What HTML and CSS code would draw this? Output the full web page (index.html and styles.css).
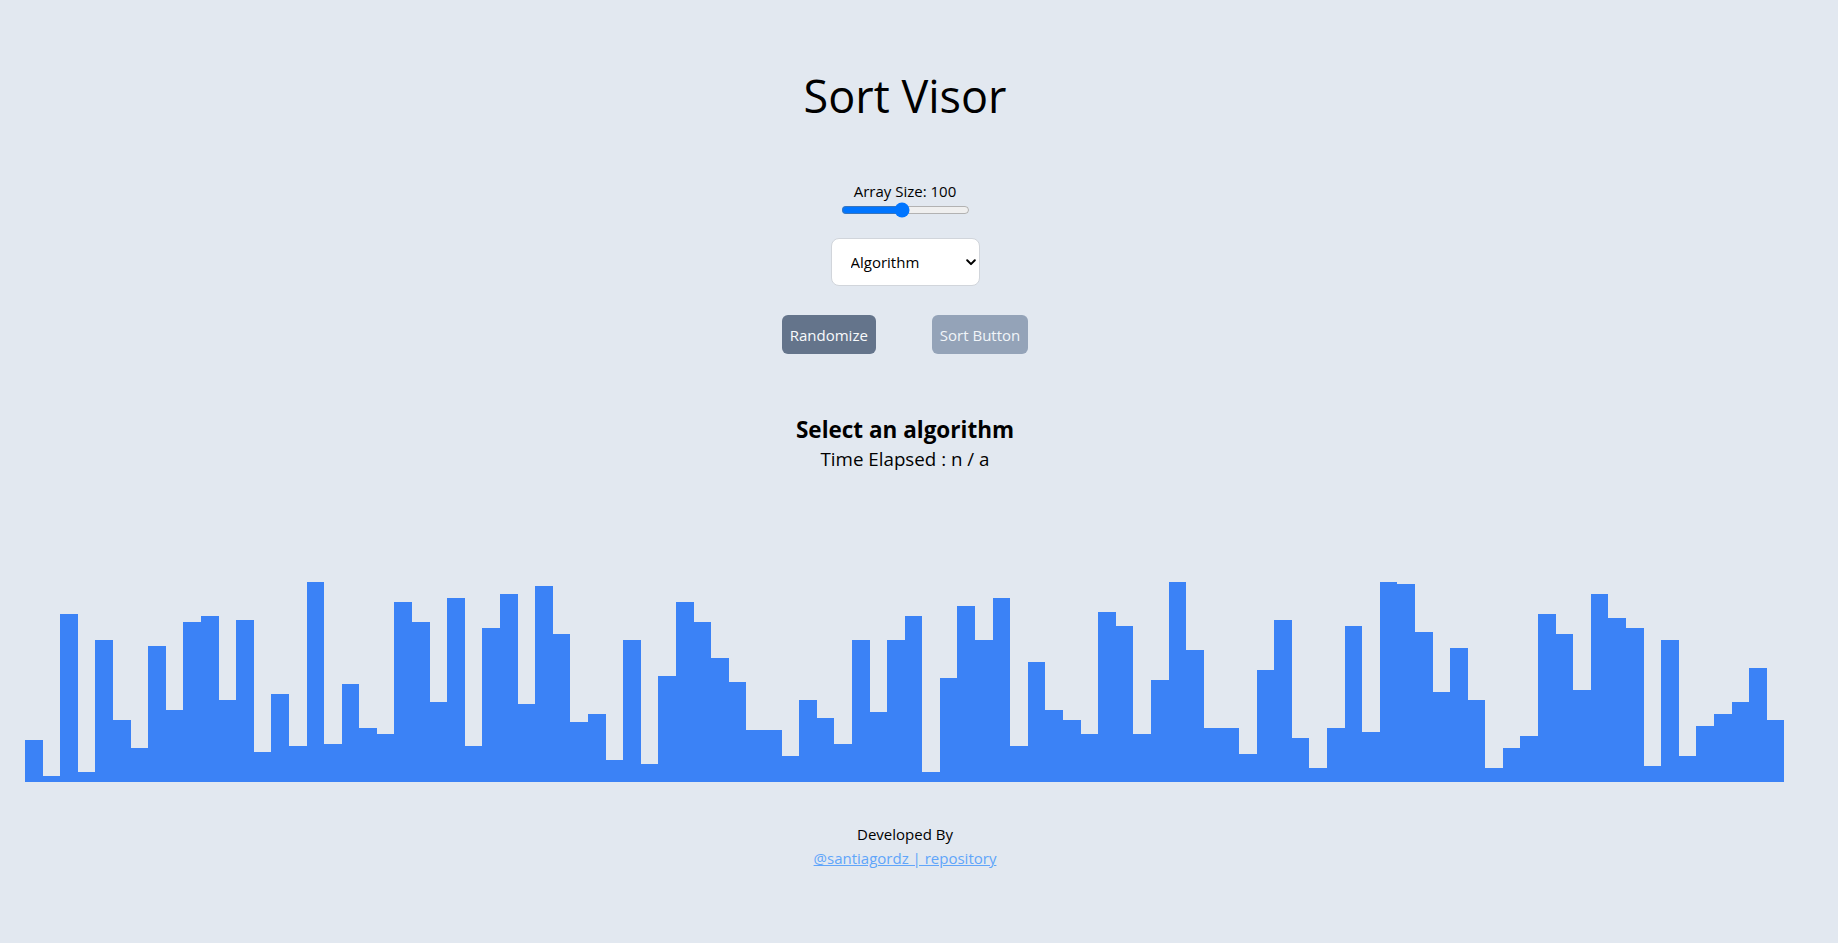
FILE: index.html
```html
<!DOCTYPE html>
<html lang="en">
<head>
<meta charset="utf-8">
<title>Sort Visor</title>
<link rel="stylesheet" href="styles.css">
</head>
<body>
<div class="page">
  <h1 class="title">Sort Visor</h1>
  <label class="size-label" for="size">Array Size: 100</label>
  <input class="size-range" id="size" type="range" min="10" max="200" value="100">
  <div class="select-wrap">
    <select class="algo-select">
      <option>Algorithm</option>
      <option>Bubble Sort</option>
      <option>Selection Sort</option>
      <option>Insertion Sort</option>
      <option>Merge Sort</option>
      <option>Quick Sort</option>
    </select>
    <svg class="chevron" width="10" height="7" viewBox="0 0 10 7" aria-hidden="true"><path d="M1.2 1.3 L5 5.1 L8.8 1.3" fill="none" stroke="#000" stroke-width="2" stroke-linecap="round" stroke-linejoin="round"/></svg>
  </div>
  <div class="actions">
    <button class="btn btn-random" type="button">Randomize</button>
    <button class="btn btn-sort" type="button">Sort Button</button>
  </div>
  <h2 class="status">Select an algorithm</h2>
  <p class="elapsed">Time Elapsed : n / a</p>
  <div class="bars">
    <div class="bar" style="height:42px"></div>
    <div class="bar" style="height:6px"></div>
    <div class="bar" style="height:168px"></div>
    <div class="bar" style="height:10px"></div>
    <div class="bar" style="height:142px"></div>
    <div class="bar" style="height:62px"></div>
    <div class="bar" style="height:34px"></div>
    <div class="bar" style="height:136px"></div>
    <div class="bar" style="height:72px"></div>
    <div class="bar" style="height:160px"></div>
    <div class="bar" style="height:166px"></div>
    <div class="bar" style="height:82px"></div>
    <div class="bar" style="height:162px"></div>
    <div class="bar" style="height:30px"></div>
    <div class="bar" style="height:88px"></div>
    <div class="bar" style="height:36px"></div>
    <div class="bar" style="height:200px"></div>
    <div class="bar" style="height:38px"></div>
    <div class="bar" style="height:98px"></div>
    <div class="bar" style="height:54px"></div>
    <div class="bar" style="height:48px"></div>
    <div class="bar" style="height:180px"></div>
    <div class="bar" style="height:160px"></div>
    <div class="bar" style="height:80px"></div>
    <div class="bar" style="height:184px"></div>
    <div class="bar" style="height:36px"></div>
    <div class="bar" style="height:154px"></div>
    <div class="bar" style="height:188px"></div>
    <div class="bar" style="height:78px"></div>
    <div class="bar" style="height:196px"></div>
    <div class="bar" style="height:148px"></div>
    <div class="bar" style="height:60px"></div>
    <div class="bar" style="height:68px"></div>
    <div class="bar" style="height:22px"></div>
    <div class="bar" style="height:142px"></div>
    <div class="bar" style="height:18px"></div>
    <div class="bar" style="height:106px"></div>
    <div class="bar" style="height:180px"></div>
    <div class="bar" style="height:160px"></div>
    <div class="bar" style="height:124px"></div>
    <div class="bar" style="height:100px"></div>
    <div class="bar" style="height:52px"></div>
    <div class="bar" style="height:52px"></div>
    <div class="bar" style="height:26px"></div>
    <div class="bar" style="height:82px"></div>
    <div class="bar" style="height:64px"></div>
    <div class="bar" style="height:38px"></div>
    <div class="bar" style="height:142px"></div>
    <div class="bar" style="height:70px"></div>
    <div class="bar" style="height:142px"></div>
    <div class="bar" style="height:166px"></div>
    <div class="bar" style="height:10px"></div>
    <div class="bar" style="height:104px"></div>
    <div class="bar" style="height:176px"></div>
    <div class="bar" style="height:142px"></div>
    <div class="bar" style="height:184px"></div>
    <div class="bar" style="height:36px"></div>
    <div class="bar" style="height:120px"></div>
    <div class="bar" style="height:72px"></div>
    <div class="bar" style="height:62px"></div>
    <div class="bar" style="height:48px"></div>
    <div class="bar" style="height:170px"></div>
    <div class="bar" style="height:156px"></div>
    <div class="bar" style="height:48px"></div>
    <div class="bar" style="height:102px"></div>
    <div class="bar" style="height:200px"></div>
    <div class="bar" style="height:132px"></div>
    <div class="bar" style="height:54px"></div>
    <div class="bar" style="height:54px"></div>
    <div class="bar" style="height:28px"></div>
    <div class="bar" style="height:112px"></div>
    <div class="bar" style="height:162px"></div>
    <div class="bar" style="height:44px"></div>
    <div class="bar" style="height:14px"></div>
    <div class="bar" style="height:54px"></div>
    <div class="bar" style="height:156px"></div>
    <div class="bar" style="height:50px"></div>
    <div class="bar" style="height:200px"></div>
    <div class="bar" style="height:198px"></div>
    <div class="bar" style="height:150px"></div>
    <div class="bar" style="height:90px"></div>
    <div class="bar" style="height:134px"></div>
    <div class="bar" style="height:82px"></div>
    <div class="bar" style="height:14px"></div>
    <div class="bar" style="height:34px"></div>
    <div class="bar" style="height:46px"></div>
    <div class="bar" style="height:168px"></div>
    <div class="bar" style="height:148px"></div>
    <div class="bar" style="height:92px"></div>
    <div class="bar" style="height:188px"></div>
    <div class="bar" style="height:164px"></div>
    <div class="bar" style="height:154px"></div>
    <div class="bar" style="height:16px"></div>
    <div class="bar" style="height:142px"></div>
    <div class="bar" style="height:26px"></div>
    <div class="bar" style="height:56px"></div>
    <div class="bar" style="height:68px"></div>
    <div class="bar" style="height:80px"></div>
    <div class="bar" style="height:114px"></div>
    <div class="bar" style="height:62px"></div>
  </div>
  <footer class="footer">
    <p class="credit">Developed By</p>
    <a class="credit-link" href="#">@santiagordz | repository</a>
  </footer>
</div>
</body>
</html>
```

FILE: styles.css
```css
html, body {
  margin: 0;
  padding: 0;
}

body {
  background: #e2e8f0;
  color: #000;
  font-family: "Open Sans", "Noto Sans", sans-serif;
}

.page {
  width: calc(100% - 28px);
  display: flex;
  flex-direction: column;
  align-items: center;
  padding-bottom: 60px;
}

.title {
  margin: 72px 0 0;
  font-size: 45px;
  line-height: 48px;
  font-weight: 400;
}

.size-label {
  margin-top: 60px;
  font-size: 15px;
  line-height: 22px;
}

.size-range {
  display: block;
  width: 129px;
  height: 16px;
  margin: 0;
}

.select-wrap {
  position: relative;
  margin-top: 20px;
}

.algo-select {
  appearance: none;
  -webkit-appearance: none;
  display: block;
  width: 149px;
  height: 48px;
  padding: 0 0 0 19px;
  margin: 0;
  border: 1px solid #d1d5db;
  border-radius: 8px;
  background: #fff;
  color: #000;
  font-family: "Open Sans", "Noto Sans", sans-serif;
  font-size: 15px;
}

.chevron {
  position: absolute;
  right: 4px;
  top: 21px;
  pointer-events: none;
}

.actions {
  display: flex;
  gap: 56px;
  margin-top: 29px;
}

.btn {
  height: 39px;
  padding: 0 8px;
  border: none;
  border-radius: 6px;
  font-family: "Open Sans", "Noto Sans", sans-serif;
  font-size: 15px;
  line-height: 24px;
  cursor: pointer;
}

.btn-random {
  background: #64748b;
  color: #f8fafc;
}

.btn-sort {
  background: #94a3b8;
  color: #f1f5f9;
}

.status {
  margin: 60px 0 0;
  font-size: 22.5px;
  line-height: 31px;
  font-weight: 700;
}

.elapsed {
  margin: 0;
  font-size: 18.75px;
  line-height: 28px;
}

.bars {
  align-self: stretch;
  display: flex;
  align-items: flex-end;
  height: 200px;
  margin-top: 109px;
  padding: 0 25px;
}

.bar {
  flex: 1 1 0;
  background: #3b82f6;
}

.footer {
  display: flex;
  flex-direction: column;
  align-items: center;
  margin-top: 40px;
}

.credit {
  margin: 0;
  font-size: 15px;
  line-height: 24px;
}

.credit-link {
  font-size: 15px;
  line-height: 24px;
  color: #60a5fa;
  text-decoration: underline;
}
```
